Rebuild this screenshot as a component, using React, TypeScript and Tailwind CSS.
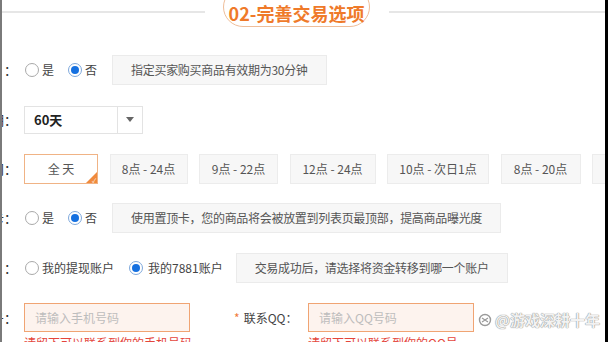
import React from "react";

function Radio({ checked }: { checked?: boolean }) {
  if (checked) {
    return (
      <span className="w-[14px] h-[14px] shrink-0 rounded-full border border-[#7ea8dc] bg-white flex items-center justify-center">
        <span className="w-[8px] h-[8px] rounded-full bg-[#1570e0]" />
      </span>
    );
  }
  return <span className="w-[14px] h-[14px] shrink-0 rounded-full border border-[#a9a9a9] bg-white" />;
}

function Label({ text }: { text: string }) {
  return (
    <div className="w-[15px] mr-[7px] flex justify-end overflow-hidden whitespace-nowrap text-[13px] text-[#333] shrink-0">
      <span>{text}</span>
    </div>
  );
}

function InfoBox({ children }: { children: React.ReactNode }) {
  return (
    <div className="h-[30px] px-[18px] flex items-center bg-[#f7f7f7] border border-[#ebebeb] text-[12px] tracking-[-0.3px] text-[#555] whitespace-nowrap shrink-0">
      {children}
    </div>
  );
}

const slots = [
  { t: "8点 - 24点", w: "w-[78px]" },
  { t: "9点 - 22点", w: "w-[79px]" },
  { t: "12点 - 24点", w: "w-[86px]" },
  { t: "10点 - 次日1点", w: "w-[102px]" },
  { t: "8点 - 20点", w: "w-[80px]" },
  { t: "自定义", w: "w-[80px]" },
];

export default function App() {
  return (
    <div className="w-[608px] h-[342px] bg-white border-l-2 border-l-[#7a7a7a] border-r-[3px] border-r-black overflow-hidden relative font-['Noto_Sans_CJK_SC','Noto_Sans',sans-serif]">
      {/* header */}
      <div className="h-[45px] flex items-start">
        <div className="w-[203px] h-[2px] mt-[11px] bg-[#e6e6e6] shrink-0" />
        <div className="ml-[18px] -mt-[13px] w-[147px] h-[40px] rounded-full border-[1.5px] border-[#efbe9a] bg-white flex justify-center pt-[15px] shrink-0">
          <span className="text-[18px] leading-[20px] font-bold text-[#ef7a2a] whitespace-nowrap">02-完善交易选项</span>
        </div>
        <div className="ml-[19px] flex-1 h-[2px] mt-[11px] bg-[#e6e6e6]" />
      </div>

      {/* row 1 */}
      <div className="h-[50px] flex items-center">
        <Label text="　：" />
        <div className="ml-[1px] flex items-center gap-[3px]">
          <Radio />
          <span className="text-[12px] text-[#444]">是</span>
        </div>
        <div className="ml-[14px] flex items-center gap-[3px]">
          <Radio checked />
          <span className="text-[12px] text-[#444]">否</span>
        </div>
        <div className="ml-[15px]">
          <InfoBox>指定买家购买商品有效期为30分钟</InfoBox>
        </div>
      </div>

      {/* row 2 */}
      <div className="h-[49px] flex items-center">
        <Label text="有效期：" />
        <div className="w-[119px] h-[28px] border border-[#e3e3e3] bg-white flex items-stretch">
          <div className="flex-1 flex items-center pl-[9px] text-[13px] font-bold text-[#222]">60天</div>
          <div className="w-[25px] border-l border-[#e3e3e3] flex items-center justify-center">
            <span className="w-0 h-0 border-l-[4px] border-r-[4px] border-t-[5px] border-l-transparent border-r-transparent border-t-[#666]" />
          </div>
        </div>
      </div>

      {/* row 3 */}
      <div className="h-[49px] flex items-center">
        <Label text="时间：" />
        <div className="flex items-center gap-[11.5px]">
          <div className="relative w-[74px] h-[30px] border border-[#f0b385] bg-white flex items-center justify-center text-[12px] text-[#555] shrink-0">
            全 天
            <span className="absolute right-0 bottom-0 w-0 h-0 border-l-[11px] border-b-[11px] border-l-transparent border-b-[#f08a3c]" />
            <span className="absolute right-[1px] bottom-[-1px] text-[6px] leading-none text-white">✓</span>
          </div>
          {slots.map((s) => (
            <div
              key={s.t}
              className={`${s.w} h-[30px] border border-[#ececec] bg-[#f7f7f7] flex items-center justify-center text-[12px] text-[#555] whitespace-nowrap shrink-0`}
            >
              {s.t}
            </div>
          ))}
        </div>
      </div>

      {/* row 4 */}
      <div className="h-[49px] flex items-center">
        <Label text="置顶卡：" />
        <div className="ml-[1px] flex items-center gap-[3px]">
          <Radio />
          <span className="text-[12px] text-[#444]">是</span>
        </div>
        <div className="ml-[14px] flex items-center gap-[3px]">
          <Radio checked />
          <span className="text-[12px] text-[#444]">否</span>
        </div>
        <div className="ml-[15px]">
          <InfoBox>使用置顶卡，您的商品将会被放置到列表页最顶部，提高商品曝光度</InfoBox>
        </div>
      </div>

      {/* row 5 */}
      <div className="h-[51px] flex items-center">
        <Label text="　：" />
        <div className="ml-[1px] flex items-center gap-[3px]">
          <Radio />
          <span className="text-[12px] text-[#444] whitespace-nowrap">我的提现账户</span>
        </div>
        <div className="ml-[15px] flex items-center gap-[5px]">
          <Radio checked />
          <span className="text-[12px] text-[#444] whitespace-nowrap">我的7881账户</span>
        </div>
        <div className="ml-[13px]">
          <InfoBox>交易成功后，请选择将资金转移到哪一个账户</InfoBox>
        </div>
      </div>

      {/* row 6 */}
      <div className="pt-[10px] flex items-start">
        <div className="h-[29px] flex items-center">
          <Label text="手机号：" />
        </div>
        <div className="flex flex-col shrink-0">
          <div className="w-[166px] h-[29px] border border-[#f0a473] bg-[#fdf3ee] flex items-center pl-[10px] text-[12px] text-[#bdbdbd]">
            请输入手机号码
          </div>
          <div className="mt-[3px] text-[12px] leading-[16px] text-[#e4463c] whitespace-nowrap">请留下可以联系到你的手机号码</div>
        </div>
        <div className="ml-[42px] w-[74px] h-[29px] flex items-center text-[12px] text-[#444] whitespace-nowrap shrink-0">
          <span className="text-[#f07a3a] mr-[4px]">*</span>
          联系QQ：
        </div>
        <div className="flex flex-col shrink-0">
          <div className="w-[166px] h-[29px] border border-[#f0a473] bg-[#fdf3ee] flex items-center pl-[10px] text-[12px] text-[#bdbdbd]">
            请输入QQ号码
          </div>
          <div className="mt-[3px] text-[12px] leading-[16px] text-[#e4463c] whitespace-nowrap">请留下可以联系到你的QQ号</div>
        </div>
      </div>

      {/* watermark */}
      <div className="absolute left-[476px] top-[309px] flex items-center gap-[2px] text-[15px] font-bold text-[#f2f2f2] whitespace-nowrap [text-shadow:0_0_1px_#8a8a8a,0_0_1px_#8a8a8a]">
        <svg width="14" height="14" viewBox="0 0 14 14" className="mr-[1px]">
          <circle cx="7" cy="7" r="5.5" fill="none" stroke="#9a9a9a" strokeWidth="1.4" />
          <path d="M4 5 L10 9 M4 9 L10 5" stroke="#9a9a9a" strokeWidth="1.2" />
        </svg>
        <span>@游戏深耕十年</span>
      </div>
    </div>
  );
}
